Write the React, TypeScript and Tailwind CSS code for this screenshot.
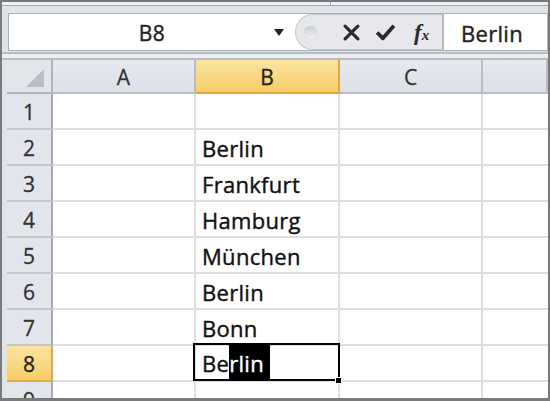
import { Fragment } from 'react'

const font = { fontFamily: '"Open Sans", "Noto Sans", sans-serif' }

const cols = ['A', 'B', 'C', '']
const values: Record<number, string> = {
  2: 'Berlin',
  3: 'Frankfurt',
  4: 'Hamburg',
  5: 'München',
  6: 'Berlin',
  7: 'Bonn',
}

function FormulaBar() {
  return (
    <div className="ml-[6px] flex h-[38px] border border-[#a9b0ba] bg-white">
      <div className="relative flex w-[286px] items-center justify-center pt-[3px] text-[21px] text-[#222] [-webkit-text-stroke:0.4px_#222]">
        <span className="tracking-[0.5px]">B8</span>
        <span className="absolute right-[11px] top-[15px] h-0 w-0 border-x-[5px] border-t-[7px] border-x-transparent border-t-[#222]" />
      </div>
      <div className="flex w-[147px] items-center rounded-l-full border-y border-l border-[#c3c8cf] bg-[#e6e8ec]">
        <span className="ml-[8px] h-[13px] w-[13px] rounded-full bg-gradient-to-b from-[#c9ccd1] to-[#f2f3f5] shadow-[0_0_0_1px_#e0e2e5]" />
        <svg className="ml-[26px]" width="17" height="17" viewBox="0 0 16 16">
          <path d="M2 2 L14 14 M14 2 L2 14" stroke="#2b2b2b" strokeWidth="3" strokeLinecap="round" />
        </svg>
        <svg className="ml-[15px]" width="21" height="18" viewBox="0 0 20 17">
          <path d="M2 9 L7.5 14.5 L18 2.5" fill="none" stroke="#2b2b2b" strokeWidth="3.6" strokeLinejoin="round" />
        </svg>
        <span
          className="ml-[18px] text-[23px] font-bold italic leading-none text-[#2b2b2b]"
          style={{ fontFamily: '"Liberation Serif", serif' }}
        >
          f<span className="text-[15px]">x</span>
        </span>
      </div>
      <div className="flex flex-1 items-center border-l-2 border-[#b4b9c0] pl-[17px] pt-[2px] text-[22px] tracking-[0.3px] text-[#222] [-webkit-text-stroke:0.4px_#222]">
        Berlin
      </div>
    </div>
  )
}

function Header({ label, active }: { label: string; active?: boolean }) {
  return (
    <div
      className={
        active
          ? 'flex items-center justify-center border-b-2 border-r-2 border-[#e2a93f] bg-gradient-to-b from-[#fbe4a0] to-[#f6cd67] pt-[3px] text-[21px] text-[#222] [-webkit-text-stroke:0.3px_#222]'
          : 'flex items-center justify-center border-b-2 border-r-2 border-[#b9bdc4] bg-gradient-to-b from-[#e6e9ee] to-[#dde1e7] pt-[3px] text-[21px] text-[#333] [-webkit-text-stroke:0.3px_#333]'
      }
    >
      {label}
    </div>
  )
}

export default function App() {
  const rows = [1, 2, 3, 4, 5, 6, 7, 8, 9]
  return (
    <div
      className="h-[401px] w-[550px] overflow-hidden border-2 border-b-[3px] border-[#7a7a7a] bg-[#dfe3ea]"
      style={font}
    >
      <div className="flex h-[4px] border-b border-[#a3a9b1] bg-[#eef0f3]">
        <div className="w-[329px] border-r border-[#a3a9b1]" />
      </div>
      <div className="h-[7px]" />
      <FormulaBar />
      <div className="mt-[1px] h-[2px] bg-[#b7bcc3]" />
      <div className="h-[4px] bg-[#eceef1]" />
      <div className="h-[2px] bg-[#b7bcc3]" />
      <div className="ml-[5px] grid grid-cols-[46px_143px_144px_143px_1fr] grid-rows-[34px] auto-rows-[36px]">
        <div className="flex items-end justify-end border-b-2 border-r-2 border-[#b0b5bd] bg-[#e2e6eb] pb-[5px] pr-[7px]">
          <span className="h-0 w-0 border-b-[18px] border-l-[18px] border-l-transparent border-b-[#b9bec6]" />
        </div>
        {cols.map(c => (
          <Header key={c || 'd'} label={c} active={c === 'B'} />
        ))}
        {rows.map(r => (
          <Fragment key={r}>
            <div
              className={
                r === 8
                  ? 'flex items-center justify-center border-b-2 border-r-2 border-[#e2a93f] bg-gradient-to-b from-[#fbe4a0] to-[#f6cd67] pt-[4px] text-[21px] text-[#222] [-webkit-text-stroke:0.3px_#222]'
                  : 'flex items-center justify-center border-b-2 border-r-2 border-b-[#c3c7ce] border-r-[#a6acb4] bg-[#e2e6ec] pt-[4px] text-[21px] text-[#333] [-webkit-text-stroke:0.3px_#333]'
              }
            >
              {r}
            </div>
            <div className="border-b-2 border-r-2 border-[#dcdee1] bg-white" />
            {r === 8 ? (
              <div className="relative border-b-2 border-r-2 border-[#dcdee1] bg-white">
                <div className="absolute -bottom-[1px] -left-[3px] -right-[2px] -top-[3px] flex items-stretch border-2 border-black pl-[7px] text-[22px] tracking-[0.3px] text-[#111] [-webkit-text-stroke:0.4px_#111]">
                  <span className="flex items-center pt-[2px]">Be</span>
                  <span className="flex items-center bg-black pr-[6px] pt-[2px] text-white [-webkit-text-stroke:0.4px_#fff]">
                    rlin
                  </span>
                </div>
                <span className="absolute -bottom-[4px] -right-[4px] h-[7px] w-[7px] border border-white bg-black" />
              </div>
            ) : (
              <div className="flex items-center border-b-2 border-r-2 border-[#dcdee1] bg-white pl-[6px] pt-[2px] text-[22px] tracking-[0.3px] text-[#111] [-webkit-text-stroke:0.4px_#111]">
                {values[r] ?? ''}
              </div>
            )}
            <div className="border-b-2 border-r-2 border-[#dcdee1] bg-white" />
            <div className="border-b-2 border-[#dcdee1] bg-white" />
          </Fragment>
        ))}
      </div>
    </div>
  )
}
